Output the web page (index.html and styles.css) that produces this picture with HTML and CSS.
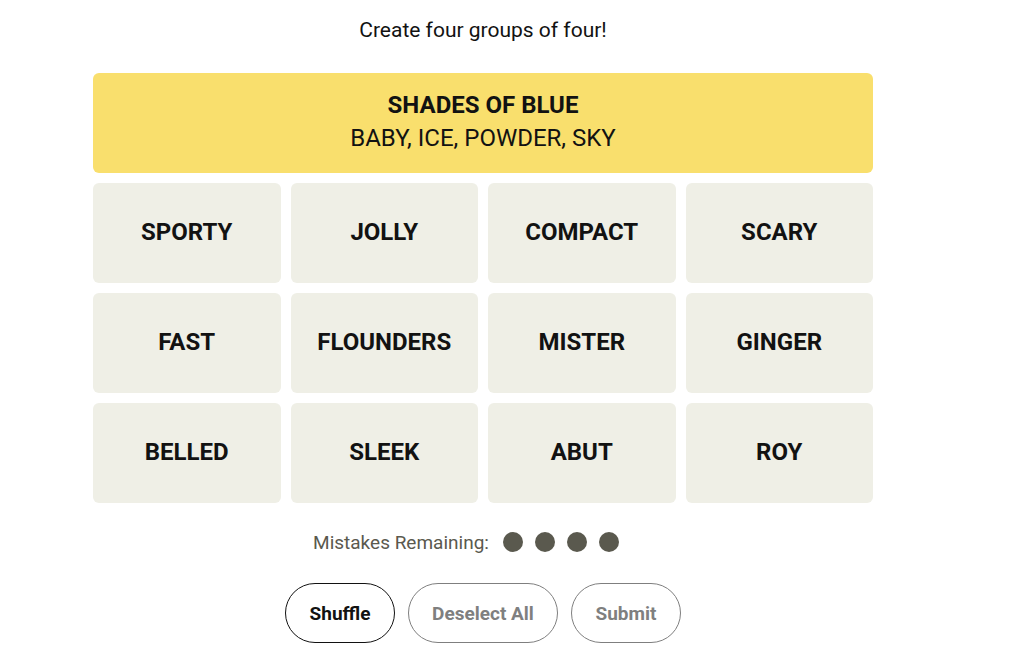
FILE: index.html
```html
<!DOCTYPE html>
<html>
<head>
<meta charset="utf-8">
<link rel="stylesheet" href="styles.css">
</head>
<body>
<main class="game">
  <p class="intro">Create four groups of four!</p>
  <section class="board">
    <div class="solved">
      <h3 class="solved-title">SHADES OF BLUE</h3>
      <p class="solved-words">BABY, ICE, POWDER, SKY</p>
    </div>
    <div class="grid">
      <div class="tile">SPORTY</div>
      <div class="tile">JOLLY</div>
      <div class="tile">COMPACT</div>
      <div class="tile">SCARY</div>
      <div class="tile">FAST</div>
      <div class="tile">FLOUNDERS</div>
      <div class="tile">MISTER</div>
      <div class="tile">GINGER</div>
      <div class="tile">BELLED</div>
      <div class="tile">SLEEK</div>
      <div class="tile">ABUT</div>
      <div class="tile">ROY</div>
    </div>
  </section>
  <div class="mistakes">
    <span class="mistakes-label">Mistakes Remaining:</span>
    <span class="dots"><i class="dot"></i><i class="dot"></i><i class="dot"></i><i class="dot"></i></span>
  </div>
  <div class="actions">
    <button class="btn btn-active btn-shuffle">Shuffle</button>
    <button class="btn btn-disabled btn-deselect">Deselect All</button>
    <button class="btn btn-disabled btn-submit">Submit</button>
  </div>
</main>
</body>
</html>
```
FILE: styles.css
```css
* { box-sizing: border-box; }
html, body { margin: 0; padding: 0; background: #fff; }
body {
  font-family: Roboto, "Liberation Sans", Arial, sans-serif;
  color: #121212;
}
.game {
  width: 780px;
  margin-left: 93px;
  display: flex;
  flex-direction: column;
  align-items: center;
}
.intro {
  margin: 18px 0 0;
  font-size: 21px;
  line-height: 24px;
  font-weight: 400;
}
.board {
  width: 780px;
  margin-top: 31px;
  display: flex;
  flex-direction: column;
  gap: 10px;
}
.solved {
  background: #f9df6d;
  border-radius: 6px;
  height: 100px;
  padding-bottom: 3px;
  display: flex;
  flex-direction: column;
  align-items: center;
  justify-content: center;
}
.solved-title {
  margin: 0;
  font-size: 24px;
  font-weight: 700;
  line-height: 28px;
}
.solved-words {
  margin: 5px 0 0;
  font-size: 24px;
  font-weight: 400;
  line-height: 28px;
}
.grid {
  display: grid;
  grid-template-columns: repeat(4, 1fr);
  gap: 10px;
}
.tile {
  background: #efefe6;
  border-radius: 6px;
  height: 100px;
  padding-bottom: 3px;
  display: flex;
  align-items: center;
  justify-content: center;
  font-size: 24px;
  font-weight: 700;
  color: #121212;
}
.mistakes {
  margin-top: 27px;
  margin-right: 34px;
  display: flex;
  align-items: center;
  gap: 14px;
  height: 24px;
}
.mistakes-label {
  font-size: 19px;
  color: #5a594e;
}
.dots {
  display: flex;
  gap: 12px;
}
.dot {
  display: block;
  width: 20px;
  height: 20px;
  border-radius: 50%;
  background: #5a594e;
}
.actions {
  margin-top: 29px;
  display: flex;
  gap: 13px;
}
.btn {
  height: 60px;
  border-radius: 30px;
  background: #fff;
  font-family: Roboto, "Liberation Sans", Arial, sans-serif;
  font-size: 19px;
  font-weight: 700;
  padding: 0;
}
.btn-active { border: 1px solid #121212; color: #121212; }
.btn-disabled { border: 1px solid #7f7f7f; color: #7f7f7f; }
.btn-shuffle { width: 110px; }
.btn-deselect { width: 150px; }
.btn-submit { width: 110px; }
```
